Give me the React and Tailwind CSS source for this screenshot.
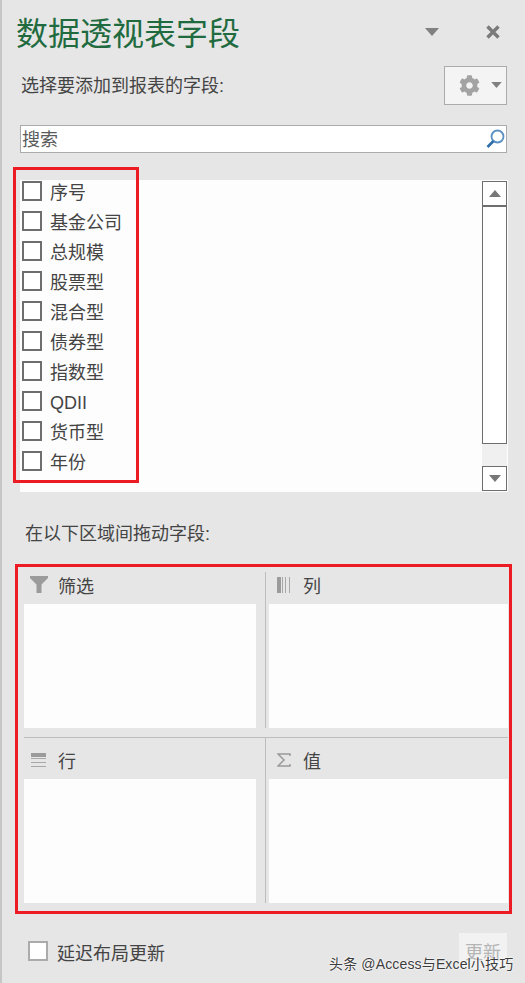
import React from 'react';
import { FaCog } from 'react-icons/fa';

const FIELDS = ['序号', '基金公司', '总规模', '股票型', '混合型', '债券型', '指数型', 'QDII', '货币型', '年份'];

function Caret({ className }) {
  return (
    <svg className={className} width="14" height="8" viewBox="0 0 14 8">
      <path d="M0 0H14L7 8Z" fill="#808080" />
    </svg>
  );
}

function FilterIcon() {
  return (
    <svg className="-mt-[3px]" width="19" height="18" viewBox="0 0 19 18">
      <path d="M0 0H18V2L11.5 8.5V17H6.5V8.5L0 2Z" fill="#9b9b9b" />
    </svg>
  );
}

function ColumnsIcon() {
  return (
    <svg className="-mt-[3px] ml-[2px]" width="14" height="16" viewBox="0 0 14 16">
      <rect x="0" y="0" width="4" height="16" fill="#9b9b9b" />
      <rect x="5" y="0" width="1" height="16" fill="#a8a8a8" />
      <rect x="8" y="0" width="1" height="16" fill="#a8a8a8" />
      <rect x="12" y="0" width="1" height="16" fill="#a8a8a8" />
    </svg>
  );
}

function RowsIcon() {
  return (
    <svg className="-mt-[3px] ml-[1px]" width="16" height="14" viewBox="0 0 16 14">
      <rect x="0" y="0" width="15" height="4" fill="#9b9b9b" />
      <rect x="0" y="5" width="15" height="1" fill="#a8a8a8" />
      <rect x="0" y="9" width="15" height="1" fill="#a8a8a8" />
      <rect x="0" y="13" width="15" height="1" fill="#a8a8a8" />
    </svg>
  );
}

function SigmaIcon() {
  return (
    <svg className="-mt-[3px] ml-[2px]" width="14" height="14" viewBox="0 0 14 14">
      <path d="M13 3V1H1L7 7L1 13H13V11" fill="none" stroke="#9b9b9b" strokeWidth="1.5" />
    </svg>
  );
}

function AreaPane({ icon, label, className }) {
  return (
    <div className={`flex flex-col ${className}`}>
      <div className="flex h-[32px] items-center pb-[3px] text-[18px] leading-[24px] text-[#444]">
        <span className="flex w-[34px] justify-start pl-[6px]">{icon}</span>
        <span>{label}</span>
      </div>
      <div className="h-[124px] bg-[#fdfdfd]" />
    </div>
  );
}

export default function App() {
  return (
    <div className="relative flex h-[983px] w-[525px] flex-col overflow-hidden border-l-2 border-[#c6c6c6] bg-[#e6e6e6] font-['Liberation_Sans','Noto_Sans_CJK_SC',sans-serif] text-[#444]">
      {/* Title */}
      <div className="flex h-[67px] items-center pl-[14px] pr-[25px]">
        <h1 className="flex-1 pt-[1px] text-[32px] font-normal leading-[40px] text-[#1f6b3f]">数据透视表字段</h1>
        <Caret className="mr-[47px] mb-[4px]" />
        <svg className="mb-[3px]" width="14" height="14" viewBox="0 0 14 14">
          <path d="M1.5 1.5L12.5 12.5M12.5 1.5L1.5 12.5" stroke="#7a7a7a" strokeWidth="3.4" />
        </svg>
      </div>

      {/* Field heading and gear */}
      <div className="flex h-[36px] items-center pl-[19px] pr-[18px]">
        <p className="flex-1 pt-[2px] text-[18px] leading-[24px]">选择要添加到报表的字段:</p>
        <div className="flex h-[39px] w-[63px] items-center gap-[11px] border border-[#ababab] bg-[#f4f4f4] pl-[14px]">
          <FaCog size={21} color="#a3a3a3" />
          <Caret className="h-[6px] w-[11px]" />
        </div>
      </div>

      {/* Search */}
      <div className="mx-[18px] mt-[22px] flex h-[28px] items-center justify-between border border-[#ababab] bg-white px-[1px]">
        <span className="pt-[2px] text-[18px] leading-[24px] text-[#5a5a5a]">搜索</span>
        <svg width="19" height="20" viewBox="0 0 19 20">
          <circle cx="11.5" cy="7.5" r="6" fill="none" stroke="#5b8fc2" strokeWidth="1.8" />
          <path d="M7.5 12L1.5 18" stroke="#2f6ea8" strokeWidth="2.6" />
        </svg>
      </div>

      {/* Field list */}
      <div className="ml-[18px] mt-[27px] flex h-[312px] w-[488px] bg-[#fdfdfd]">
        <ul className="flex-1">
          {FIELDS.map((f) => (
            <li key={f} className="flex h-[30px] items-start pl-[2px] pt-[1px]">
              <span className="h-[20px] w-[20px] border-2 border-[#6e6e6e] bg-white" />
              <span className="ml-[8px] text-[18px] leading-[24px]">{f}</span>
            </li>
          ))}
        </ul>
        <div className="flex w-[26px] flex-col pt-[1px]">
          <div className="flex h-[26px] w-[25px] items-center justify-center border border-b-2 border-[#6e6e6e] bg-white">
            <svg width="12" height="7" viewBox="0 0 12 7"><path d="M6 0L12 7H0Z" fill="#777" /></svg>
          </div>
          <div className="h-[237px] w-[25px] border border-t-0 border-[#6e6e6e] bg-white" />
          <div className="h-[22px] w-[25px] bg-[#f0f0f0]" />
          <div className="flex h-[25px] w-[25px] items-center justify-center border border-[#6e6e6e] bg-white">
            <svg width="12" height="7" viewBox="0 0 12 7"><path d="M0 0H12L6 7Z" fill="#777" /></svg>
          </div>
        </div>
      </div>

      {/* Drag areas */}
      <p className="ml-[23px] mt-[30px] h-[24px] text-[18px] leading-[24px]">在以下区域间拖动字段:</p>
      <div className="ml-[22px] mt-[26px] grid w-[484px] grid-cols-[232px_252px]">
        <AreaPane icon={<FilterIcon />} label="筛选" />
        <div className="flex">
          <div className="ml-[9px] w-[1px] bg-[#bdbdbd]" />
          <AreaPane icon={<ColumnsIcon />} label="列" className="ml-[3px] w-[239px]" />
        </div>
        <div className="col-span-2 mt-[9px] h-[1px] bg-[#bdbdbd]" />
        <AreaPane icon={<RowsIcon />} label="行" className="pt-[9px]" />
        <div className="flex">
          <div className="ml-[9px] w-[1px] bg-[#bdbdbd]" />
          <AreaPane icon={<SigmaIcon />} label="值" className="ml-[3px] w-[239px] pt-[9px]" />
        </div>
      </div>

      {/* Footer */}
      <div className="mt-[30px] flex items-center pl-[26px] pr-[18px]">
        <span className="h-[20px] w-[20px] border-2 border-[#ababab] bg-white" />
        <span className="ml-[9px] flex-1 pt-[5px] text-[18px] leading-[24px]">延迟布局更新</span>
        <div className="flex h-[36px] w-[48px] items-center justify-center bg-[#f2f2f2] pt-[5px] text-[18px] text-[#b5b5b5]">更新</div>
      </div>

      {/* Red annotation frames */}
      <div className="absolute left-[11px] top-[167px] h-[316px] w-[126px] border-[3px] border-[#ed1c24]" />
      <div className="absolute left-[13px] top-[564px] h-[350px] w-[497px] border-[3px] border-[#ed1c24]" />

      {/* Watermark */}
      <span className="absolute left-[327px] top-[954px] text-[14px] leading-[20px] tracking-[0.15px] text-[#3c3c3c] [text-shadow:0_0_2px_#fff,0_0_2px_#fff]">头条 @Access与Excel小技巧</span>
    </div>
  );
}
